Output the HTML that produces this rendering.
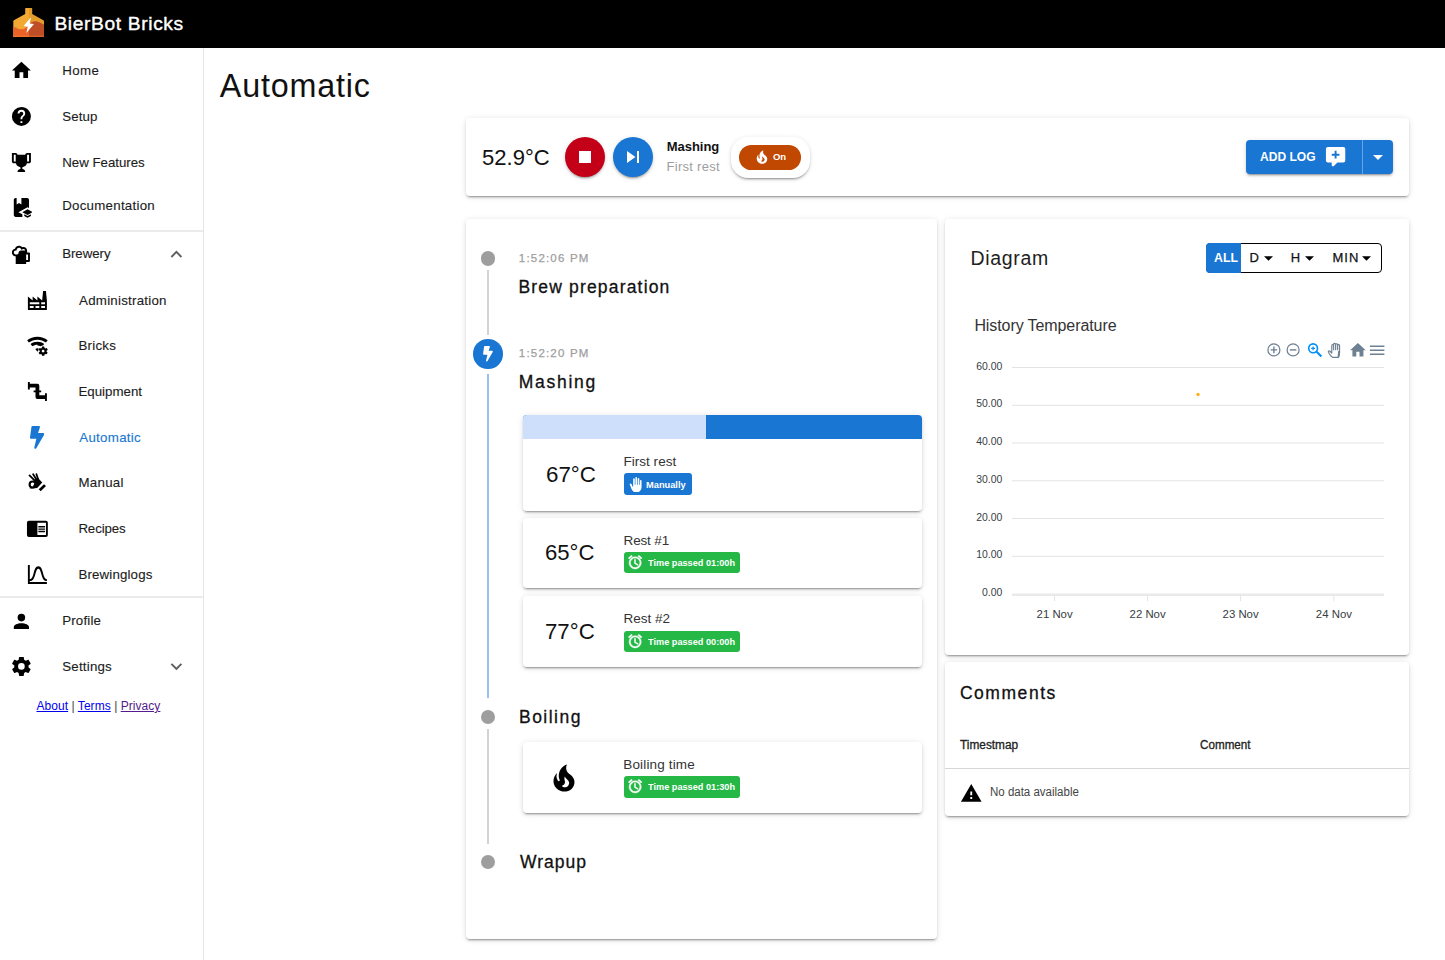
<!DOCTYPE html>
<html lang="en"><head>
<meta charset="utf-8">
<title>BierBot Bricks</title>
<style>
html,body{margin:0;padding:0;}
body{width:1445px;height:960px;position:relative;overflow:hidden;background:#fff;color:#000;
  font-family:"Liberation Sans",sans-serif;font-size:13px;}
*{box-sizing:border-box;}
.abs{position:absolute;}
.t{position:absolute;white-space:nowrap;line-height:1;}
svg{position:absolute;display:block;}
#appbar{position:absolute;left:0;top:0;width:1445px;height:48px;background:#000;}
#nav{position:absolute;left:0;top:48px;width:204.2px;height:912px;border-right:1.6px solid #e6e6e6;background:#fff;}
.hr{position:absolute;left:0;width:202.6px;height:1.9px;background:#ebebeb;}
.card{position:absolute;background:#fff;border-radius:4px;
  box-shadow:0 3px 1px -2px rgba(0,0,0,.2),0 2px 2px 0 rgba(0,0,0,.14),0 1px 6px 0 rgba(0,0,0,.12);}
.nt{font-size:13.3px;color:#1c1c1c;-webkit-text-stroke:0.12px #1c1c1c;}
.ts{font-size:11.5px;color:#9e9e9e;letter-spacing:1.3px;-webkit-text-stroke:0.25px #9e9e9e;}
.th{font-size:17.5px;font-weight:400;color:#111;-webkit-text-stroke:0.3px #111;}
.tc{font-size:22px;color:#111;}
.tn{font-size:13.5px;color:#333;}
.tch{font-size:9.7px;font-weight:700;color:#fff;}
.bt{font-size:13px;color:#111;-webkit-text-stroke:0.25px #111;}
.sc{border-radius:4px;}
.chip{position:absolute;height:20px;border-radius:3px;color:#fff;}
.chip.g{background:#25b847;}
.chip.b{background:#1976d2;}
</style>
</head>
<body>
<div id="appbar">
<svg style="left:13px;top:8px" width="31" height="29" viewBox="13 8 31 29">
  <defs><clipPath id="lg"><path d="M25.2 8.6Q25.2 8 25.8 8H31.6Q32.2 8 32.2 8.6V14L43.4 20.2Q44 20.6 44 21.3V36.4Q44 37 43.4 37H13.9Q13.3 37 13.3 36.4V21.3Q13.3 20.6 13.9 20.2L25.2 14Z"></path></clipPath></defs>
  <g clip-path="url(#lg)">
    <rect x="13" y="8" width="16" height="29" fill="#f2a933"></rect>
    <rect x="29" y="8" width="15" height="29" fill="#e39c2c"></rect>
    <path d="M13 26.6C16 27.2 18.5 30 22.5 29.2C27 28.3 29 24 29 24V37H13Z" fill="#e9622a"></path>
    <path d="M29 24C31 22.2 34 20.8 37 21.4C40.5 22 42.5 24 44 24.8V37H29Z" fill="#bf4d26"></path>
    <rect x="13" y="35.6" width="16" height="1.4" fill="#f7732a"></rect>
    <rect x="29" y="35.6" width="15" height="1.4" fill="#d8622a"></rect>
  </g>
  <path d="M30.9 17.2L23.6 26L27.7 26.7L26.4 33L34 23.9L29.7 23.6Z" fill="#fff"></path>
</svg>
<span class="t" id="brand" style="left: 54.4px; top: 13.8px; font-size: 19.2px; color: rgb(255, 255, 255); font-weight: 400; -webkit-text-stroke: 0.4px rgb(255, 255, 255); letter-spacing: 0.64px;">BierBot Bricks</span>
</div>

<div id="nav">
<!-- level 1 -->
<svg style="left:9.6px;top:11.1px" width="22.8" height="22.8" viewBox="0 0 24 24"><path d="M10,20V14H14V20H19V12H22L12,3L2,12H5V20H10Z"></path></svg>
<span class="t nt" style="left: 62.3px; top: 15.8px; letter-spacing: 0.34px;">Home</span>
<svg style="left:9.6px;top:56.8px" width="22.8" height="22.8" viewBox="0 0 24 24"><path d="M15.07,11.25L14.17,12.17C13.45,12.89 13,13.5 13,15H11V14.5C11,13.39 11.45,12.39 12.17,11.67L13.41,10.41C13.78,10.05 14,9.55 14,9C14,7.89 13.1,7 12,7A2,2 0 0,0 10,9H8A4,4 0 0,1 12,5A4,4 0 0,1 16,9C16,9.88 15.64,10.67 15.07,11.25M13,19H11V17H13M12,2A10,10 0 0,0 2,12A10,10 0 0,0 12,22A10,10 0 0,0 22,12C22,6.47 17.5,2 12,2Z"></path></svg>
<span class="t nt" style="left: 62.3px; top: 61.5px; letter-spacing: 0.08px;">Setup</span>
<svg style="left:9.6px;top:102.5px" width="22.8" height="22.8" viewBox="0 0 24 24"><path d="M18 2C17.1 2 16 3 16 4H8C8 3 6.9 2 6 2H2V11C2 12 3 13 4 13H6.2C6.6 15 7.9 16.7 11 17V19.08C8 19.54 8 22 8 22H16C16 22 16 19.54 13 19.08V17C16.1 16.7 17.4 15 17.8 13H20C21 13 22 12 22 11V2H18M6 11H4V4H6V11M20 11H18V4H20V11Z"></path></svg>
<span class="t nt" style="left: 62.2px; top: 108.4px; letter-spacing: -0.02px;">New Features</span>
<svg style="left:9.6px;top:148.1px" width="22.8" height="22.8" viewBox="0 0 24 24"><path d="M8.82 17L13 19.28V22H6C4.89 22 4 21.11 4 20V4C4 2.9 4.89 2 6 2H7V9L9.5 7.5L12 9V2H18C19.1 2 20 2.89 20 4V12.54L18.5 11.72L8.82 17M24 17L18.5 14L13 17L18.5 20L24 17M15 19.09V21.09L18.5 23L22 21.09V19.09L18.5 21L15 19.09Z"></path></svg>
<span class="t nt" style="left: 62.2px; top: 150.7px; letter-spacing: 0.26px;">Documentation</span>
<div class="hr" style="top:182px"></div>
<svg style="left:9.6px;top:194.8px" width="22.8" height="22.8" viewBox="0 0 24 24"><path fill-rule="evenodd" d="M6 14C3.8 14 2 12.2 2 10C2 8.1 3.3 6.5 5.2 6.1C5.8 4.3 7.5 3 9.5 3C10.8 3 12 3.6 12.8 4.5C13.2 4.3 13.7 4.2 14.2 4.2C16.3 4.2 18 5.9 18 8V10H20C20.55 10 21 10.45 21 11V19C21 19.55 20.55 20 20 20H17V22H6ZM6 12H7.5C8.3 12 9 11.3 9 10.5C9 9.1 10.1 8 11.5 8H16C16 7 15.2 6.2 14.2 6.2C13.75 6.2 13.35 6.4 13 6.7L12.2 7.3L11.8 6.5C11.4 5.6 10.5 5 9.5 5C8.3 5 7.25 5.85 7 7L6.900 8H6C4.900 8 4 8.900 4 10C4 11.100 4.900 12 6 12ZM17 12V18H19V12Z"></path></svg>
<span class="t nt" style="left: 62.2px; top: 198.9px; letter-spacing: -0.06px;">Brewery</span>
<svg style="left:165.1px;top:195.3px" width="22.8" height="22.8" viewBox="0 0 24 24"><path fill="#5f5f5f" d="M7.41,15.41L12,10.83L16.59,15.41L18,14L12,8L6,14L7.41,15.41Z"></path></svg>
<!-- level 2 -->
<svg style="left:25.7px;top:240.6px" width="22.8" height="22.8" viewBox="0 0 24 24"><path d="M4,18V20H8V18H4M4,14V16H14V14H4M10,18V20H14V18H10M16,14V16H20V14H16M16,18V20H20V18H16M2,22V8L7,12V8L12,12V8L17,12L18,2H21L22,12V22H2Z"></path></svg>
<span class="t nt" style="left: 79.1px; top: 245.6px; letter-spacing: 0.24px;">Administration</span>
<svg style="left:25.7px;top:286.3px" width="22.8" height="22.8" viewBox="0 0 24 24"><path d="M12 6C8.62 6 5.5 7.12 3 9L1.2 6.6C4.21 4.34 7.95 3 12 3S19.79 4.34 22.8 6.6L21 9C18.5 7.12 15.38 6 12 6M12 12C13.22 12 14.36 12.33 15.36 12.87C16.17 12.3 17.1 11.93 18.09 11.76L19.2 10.6C17.19 9.09 14.7 8.2 12 8.2S6.81 9.09 4.8 10.6L6.6 13C8.1 11.87 9.97 11.2 12 11.2M12 15C11.19 15 10.44 15.27 9.84 15.72L12 18.6L13 17.27C13 17.18 13 17.09 13 17C13 16.43 13.09 15.87 13.25 15.33C12.86 15.13 12.44 15 12 15M21.7 18.6V17.6L22.8 16.8C22.9 16.7 23 16.6 22.9 16.5L21.9 14.8C21.9 14.7 21.7 14.7 21.6 14.7L20.4 15.2C20.1 15 19.8 14.8 19.5 14.7L19.3 13.4C19.3 13.3 19.2 13.2 19.1 13.2H17.1C16.9 13.2 16.8 13.3 16.8 13.4L16.6 14.7C16.3 14.9 16.1 15 15.8 15.2L14.6 14.7C14.5 14.7 14.4 14.7 14.3 14.8L13.3 16.5C13.3 16.6 13.3 16.7 13.4 16.8L14.5 17.6V18.6L13.4 19.4C13.3 19.5 13.3 19.6 13.3 19.7L14.3 21.4C14.4 21.5 14.5 21.5 14.6 21.5L15.8 21C16 21.2 16.3 21.4 16.6 21.5L16.8 22.8C16.9 22.9 17 23 17.1 23H19.1C19.2 23 19.3 22.9 19.3 22.8L19.5 21.5C19.8 21.3 20 21.2 20.3 21L21.5 21.4C21.6 21.4 21.7 21.4 21.8 21.3L22.8 19.6C22.9 19.5 22.9 19.4 22.8 19.4L21.7 18.6M18 19.5C17.2 19.5 16.5 18.8 16.5 18S17.2 16.5 18 16.5 19.5 17.2 19.5 18 18.8 19.5 18 19.5Z"></path></svg>
<span class="t nt" style="left: 78.4px; top: 291.3px; letter-spacing: 0.25px;">Bricks</span>
<svg style="left:25.7px;top:332.0px" width="22.8" height="22.8" viewBox="0 0 24 24"><path d="M22,14H20V16H14V13H16V11H14V6A2,2 0 0,0 12,4H4V2H2V10H4V8H10V11H8V13H10V18A2,2 0 0,0 12,20H20V22H22"></path></svg>
<span class="t nt" style="left: 78.4px; top: 336.9px; letter-spacing: 0.01px;">Equipment</span>
<svg style="left:29.9px;top:377.9px" width="14.25" height="22.8" viewBox="0 0 320 512"><path fill="#1976d2" d="M296 160H180.6l42.6-129.8C227.2 15 215.7 0 200 0H56C44 0 33.8 8.9 32.2 20.8l-32 240C-1.7 275.2 9.5 288 24 288h118.7L96.6 482.5c-3.6 15.2 8 29.5 23.3 29.5 8.4 0 16.4-4.400 20.8-12l176-304c9.300-15.900-2.200-36-20.700-36z"></path></svg>
<span class="t nt" style="left: 79.3px; top: 382.5px; color: rgb(25, 118, 210); -webkit-text-stroke: 0.12px rgb(25, 118, 210); letter-spacing: 0.28px;">Automatic</span>
<svg style="left:25.7px;top:423.4px" width="22.8" height="22.8" viewBox="0 0 24 24"><path d="M18.95 14L21.05 15.9L15.5 21.3L13.4 19.2ZM8 9.5L12.7 7.4L17.1 12.1L11.8 17.9L6 18.4L9.5 12ZM3.500 18.500L7.500 16.500L8.500 18.400Z"></path><g fill="none" stroke="#000" stroke-linecap="round"><path stroke-width="1.900" d="M3.700 4.700L9.500 10.300M7.500 3.400L11 9M11 3.400L12.700 8.500"></path><circle cx="7" cy="14.200" r="3.200" stroke-width="2.200"></circle></g></svg>
<span class="t nt" style="left: 78.4px; top: 428.2px; letter-spacing: 0.29px;">Manual</span>
<svg style="left:25.7px;top:469.1px" width="22.8" height="22.8" viewBox="0 0 24 24"><path d="M13,12H20V13.5H13M13,9.5H20V11H13M13,14.5H20V16H13M21,4H3A2,2 0 0,0 1,6V19A2,2 0 0,0 3,21H21A2,2 0 0,0 23,19V6A2,2 0 0,0 21,4M21,19H12V6H21"></path></svg>
<span class="t nt" style="left: 78.4px; top: 473.9px; letter-spacing: -0.12px;">Recipes</span>
<svg style="left:25.7px;top:514.8px" width="22.8" height="22.8" viewBox="0 0 24 24"><path d="M9.96,11.31C10.82,8.1 11.5,6 13,6C14.5,6 15.18,8.1 16.04,11.31C17,14.92 18.1,19 22,19V17C19.8,17 19,14.54 17.97,10.8C16.96,7 16,3.5 13,3.5C10,3.5 9.04,7 8.03,10.8C7.03,14.54 6.2,17 4,17V2H2V22H22V20H4V19C7.9,19 9,14.92 9.96,11.31Z"></path></svg>
<span class="t nt" style="left: 78.4px; top: 519.6px; letter-spacing: 0.15px;">Brewinglogs</span>
<div class="hr" style="top:548.3px"></div>
<svg style="left:9.6px;top:561.6px" width="22.8" height="22.8" viewBox="0 0 24 24"><path d="M12,4A4,4 0 0,1 16,8A4,4 0 0,1 12,12A4,4 0 0,1 8,8A4,4 0 0,1 12,4M12,14C16.42,14 20,15.79 20,18V20H4V18C4,15.79 7.58,14 12,14Z"></path></svg>
<span class="t nt" style="left: 62.2px; top: 566.2px; letter-spacing: 0.18px;">Profile</span>
<svg style="left:9.6px;top:607.2px" width="22.8" height="22.8" viewBox="0 0 24 24"><path d="M12,15.5A3.5,3.5 0 0,1 8.5,12A3.5,3.5 0 0,1 12,8.5A3.5,3.5 0 0,1 15.5,12A3.500,3.500 0 0,1 12,15.5M19.430,12.970C19.470,12.650 19.500,12.330 19.500,12C19.500,11.670 19.470,11.340 19.430,11L21.540,9.370C21.730,9.220 21.780,8.950 21.660,8.730L19.660,5.270C19.540,5.050 19.270,4.960 19.050,5.050L16.560,6.050C16.040,5.660 15.500,5.320 14.870,5.070L14.500,2.420C14.460,2.180 14.250,2 14,2H10C9.750,2 9.540,2.180 9.500,2.420L9.130,5.070C8.500,5.320 7.960,5.660 7.440,6.050L4.950,5.050C4.730,4.960 4.460,5.050 4.340,5.270L2.340,8.730C2.210,8.950 2.270,9.220 2.460,9.370L4.570,11C4.530,11.340 4.500,11.670 4.500,12C4.500,12.330 4.530,12.650 4.570,12.970L2.460,14.630C2.270,14.780 2.210,15.050 2.340,15.270L4.340,18.730C4.460,18.950 4.730,19.030 4.950,18.950L7.440,17.940C7.960,18.340 8.500,18.680 9.130,18.930L9.500,21.580C9.540,21.820 9.750,22 10,22H14C14.250,22 14.460,21.820 14.500,21.580L14.870,18.930C15.500,18.670 16.040,18.340 16.560,17.940L19.050,18.950C19.270,19.030 19.540,18.950 19.660,18.730L21.660,15.270C21.780,15.050 21.730,14.780 21.540,14.630L19.430,12.970Z"></path></svg>
<span class="t nt" style="left: 62.2px; top: 612px; letter-spacing: 0.22px;">Settings</span>
<svg style="left:165.1px;top:607.3px" width="22.8" height="22.8" viewBox="0 0 24 24"><path fill="#5f5f5f" d="M7.41,8.58L12,13.17L16.59,8.58L18,10L12,16L6,10L7.41,8.58Z"></path></svg>
<span class="t" id="links" style="left: 36.5px; top: 652.2px; font-size: 12px; color: rgb(68, 68, 68); letter-spacing: 0.05px;"><a style="color:#0000ee;text-decoration:underline">About</a> | <a style="color:#0000ee;text-decoration:underline">Terms</a> | <a style="color:#551a8b;text-decoration:underline">Privacy</a></span>
</div>

<span class="t" id="h1" style="left: 219.8px; top: 69.9px; font-size: 32.3px; color: rgb(17, 17, 17); letter-spacing: 0.82px;">Automatic</span>

<!-- top card -->
<div class="card" style="left:466px;top:118px;width:943px;height:78px">
  <span class="t" style="left: 15.8px; top: 28.2px; font-size: 22.8px; color: rgb(17, 17, 17); letter-spacing: 0px; transform-origin: 0px 0px; transform: scaleX(0.967);">52.9°C</span>
  <div class="abs" style="left:99px;top:19px;width:40px;height:40px;border-radius:50%;background:#c30018;box-shadow:0 3px 1px -2px rgba(0,0,0,.2),0 2px 2px 0 rgba(0,0,0,.14),0 1px 5px 0 rgba(0,0,0,.12)">
    <svg style="left:8px;top:8px" width="24" height="24" viewBox="0 0 24 24"><path fill="#fff" d="M18,18H6V6H18V18Z"></path></svg></div>
  <div class="abs" style="left:146.5px;top:19px;width:40px;height:40px;border-radius:50%;background:#1976d2;box-shadow:0 3px 1px -2px rgba(0,0,0,.2),0 2px 2px 0 rgba(0,0,0,.14),0 1px 5px 0 rgba(0,0,0,.12)">
    <svg style="left:8px;top:8px" width="24" height="24" viewBox="0 0 24 24"><path fill="#fff" d="M16,18H18V6H16M6,18L14.5,12L6,6V18Z"></path></svg></div>
  <span class="t" style="left: 200.7px; top: 22.2px; font-size: 13px; font-weight: 700; color: rgb(17, 17, 17); letter-spacing: -0.03px;">Mashing</span>
  <span class="t" style="left: 200.5px; top: 42.3px; font-size: 13px; color: rgb(158, 158, 158); letter-spacing: 0.28px;">First rest</span>
  <div class="abs" style="left:265px;top:19px;width:78.5px;height:40.5px;border-radius:17px;background:#fff;box-shadow:0 3px 1px -2px rgba(0,0,0,.2),0 2px 2px 0 rgba(0,0,0,.14),0 1px 5px 0 rgba(0,0,0,.12)">
    <div class="abs" style="left:8px;top:8.1px;width:62px;height:24.6px;border-radius:12.3px;background:#c14800">
      <svg style="left:14.2px;top:3.1px" width="18" height="18" viewBox="0 0 24 24"><path fill="#fff" d="M17.66 11.2C17.43 10.9 17.15 10.64 16.89 10.38C16.22 9.78 15.46 9.35 14.82 8.72C13.33 7.26 13 4.85 13.95 3C13 3.23 12.17 3.75 11.46 4.32C8.87 6.4 7.85 10.07 9.07 13.22C9.11 13.32 9.15 13.42 9.15 13.55C9.15 13.77 9 13.97 8.8 14.05C8.57 14.15 8.33 14.09 8.14 13.93C8.08 13.88 8.04 13.83 8 13.76C6.87 12.33 6.69 10.28 7.45 8.64C5.78 10 4.87 12.3 5 14.47C5.06 14.97 5.12 15.47 5.29 15.97C5.43 16.57 5.7 17.17 6 17.7C7.08 19.43 8.95 20.67 10.96 20.92C13.1 21.19 15.39 20.8 17.03 19.32C18.86 17.66 19.5 15 18.56 12.72L18.43 12.46C18.22 12 17.66 11.2 17.66 11.2M14.5 17.5C14.22 17.74 13.76 18 13.4 18.1C12.28 18.5 11.16 17.94 10.5 17.28C11.69 17 12.4 16.12 12.61 15.23C12.78 14.43 12.46 13.77 12.33 13C12.21 12.26 12.23 11.63 12.5 10.94C12.69 11.32 12.89 11.7 13.13 12C13.9 13 15.11 13.44 15.37 14.8C15.41 14.94 15.43 15.08 15.43 15.23C15.46 16.05 15.1 16.95 14.5 17.5H14.5Z"></path></svg>
      <span class="t" style="left: 34.4px; top: 8.3px; font-size: 9px; font-weight: 700; color: rgb(255, 255, 255); letter-spacing: 0px; transform-origin: 0px 0px; transform: scaleX(1.053);">On</span>
    </div>
  </div>
  <div class="abs" style="left:780px;top:22px;width:147px;height:34px;border-radius:4px;background:#1976d2;box-shadow:0 3px 1px -2px rgba(0,0,0,.2),0 2px 2px 0 rgba(0,0,0,.14),0 1px 5px 0 rgba(0,0,0,.12)">
    <span class="t" style="left: 14.4px; top: 9.8px; font-size: 13px; font-weight: 700; color: rgb(255, 255, 255); letter-spacing: 0px; transform-origin: 0px 0px; transform: scaleX(0.927);">ADD LOG</span>
    <svg style="left:77.5px;top:5.4px" width="23.2" height="23.2" viewBox="0 0 24 24"><path fill="#fff" d="M9,22A1,1 0 0,1 8,21V18H4A2,2 0 0,1 2,16V4C2,2.89 2.9,2 4,2H20A2,2 0 0,1 22,4V16A2,2 0 0,1 20,18H13.9L10.2,21.71C10,21.9 9.75,22 9.5,22V22H9M11,6V9H8V11H11V14H13V11H16V9H13V6H11Z"></path></svg>
    <div class="abs" style="left:116px;top:0;width:1px;height:34px;background:rgba(255,255,255,.35)"></div>
    <svg style="left:120.4px;top:4.6px" width="24" height="24" viewBox="0 0 24 24"><path fill="#fff" d="M7,10L12,15L17,10H7Z"></path></svg>
  </div>
</div>

<!-- timeline card -->
<div class="card" id="tl" style="left:466px;top:219px;width:471px;height:720px">
  <div class="abs" style="left:21.1px;top:51.4px;width:2.3px;height:64.6px;background:#d3d3d3"></div>
  <div class="abs" style="left:21.1px;top:155.2px;width:2.3px;height:323.8px;background:#98c1f0"></div>
  <div class="abs" style="left:21.1px;top:510px;width:2.3px;height:114.7px;background:#d3d3d3"></div>
  <div class="abs" style="left:15px;top:32.2px;width:14.4px;height:14.4px;border-radius:50%;background:#9e9e9e"></div>
  <div class="abs" style="left:7.3px;top:120px;width:29.7px;height:29.7px;border-radius:50%;background:#1976d2">
    <svg style="left:9.9px;top:7.3px" width="9.9" height="15.6" viewBox="0 0 320 512"><path fill="#fff" d="M296 160H180.6l42.6-129.8C227.2 15 215.7 0 200 0H56C44 0 33.8 8.9 32.2 20.8l-32 240C-1.7 275.2 9.5 288 24 288h118.7L96.6 482.5c-3.6 15.2 8 29.5 23.3 29.5 8.4 0 16.4-4.400 20.8-12l176-304c9.300-15.900-2.200-36-20.700-36z"></path></svg></div>
  <div class="abs" style="left:15px;top:490.5px;width:14.4px;height:14.4px;border-radius:50%;background:#9e9e9e"></div>
  <div class="abs" style="left:15px;top:636px;width:14.4px;height:14.4px;border-radius:50%;background:#9e9e9e"></div>

  <span class="t ts" style="left: 52.8px; top: 33.9px; letter-spacing: 1.2px;">1:52:06 PM</span>
  <span class="t th" style="left: 52.4px; top: 60.1px; letter-spacing: 1.18px;">Brew preparation</span>
  <span class="t ts" style="left: 52.8px; top: 128.9px; letter-spacing: 1.2px;">1:52:20 PM</span>
  <span class="t th" style="left: 52.8px; top: 155.4px; letter-spacing: 1.72px;">Mashing</span>
  <span class="t th" style="left: 53px; top: 489.9px; letter-spacing: 1.48px;">Boiling</span>
  <span class="t th" style="left: 54px; top: 635.4px; letter-spacing: 1px;">Wrapup</span>

  <div class="card sc" style="left:57px;top:196px;width:399px;height:95.5px;overflow:hidden">
    <div class="abs" style="left:0;top:0;width:399px;height:24px;background:#1976d2"></div>
    <div class="abs" style="left:0;top:0;width:182.7px;height:24px;background:#cddffb"></div>
    <span class="t tc" style="left: 22.7px; top: 49.2px; letter-spacing: 0px; transform-origin: 0px 0px; transform: scaleX(1.016);">67°C</span>
    <span class="t tn" style="left: 100.4px; top: 39.9px; letter-spacing: 0.04px;">First rest</span>
    <div class="chip b" style="left:101px;top:58.3px;width:68.4px;height:21.6px">
      <svg style="left:3.6px;top:3.3px" width="15.5" height="15.5" viewBox="0 0 24 24"><path fill="#fff" d="M13 24C9.74 24 6.81 22 5.6 19L2.57 11.37C2.26 10.58 3 9.79 3.81 10.05L4.6 10.31C5.16 10.5 5.62 10.92 5.84 11.47L7.25 15H8V3.25C8 2.56 8.56 2 9.25 2S10.5 2.56 10.5 3.25V12H11.5V1.25C11.5 .56 12.06 0 12.75 0S14 .56 14 1.25V12H15V2.75C15 2.06 15.56 1.5 16.25 1.5C16.94 1.5 17.5 2.06 17.5 2.75V12H18.5V5.75C18.5 5.06 19.06 4.500 19.750 4.500S21 5.060 21 5.750V16C21 20.420 17.420 24 13 24Z"></path></svg>
      <span class="t tch" style="left: 21.8px; top: 6.4px; letter-spacing: 0px; transform-origin: 0px 0px; transform: scaleX(0.957);">Manually</span>
    </div>
  </div>
  <div class="card sc" style="left:57px;top:299px;width:399px;height:70.2px">
    <span class="t tc" style="left: 22.4px; top: 23.9px; letter-spacing: 0px; transform-origin: 0px 0px; transform: scaleX(1.005);">65°C</span>
    <span class="t tn" style="left: 100.6px; top: 15.8px; letter-spacing: -0.16px;">Rest #1</span>
    <div class="chip g" style="left:101px;top:34.3px;width:116px;height:20.8px">
      <svg style="left:2.7px;top:1.9px" width="16.3" height="16.3" viewBox="0 0 24 24"><path fill="#fff" stroke="#fff" stroke-width="0.7" d="M12,20A7,7 0 0,1 5,13A7,7 0 0,1 12,6A7,7 0 0,1 19,13A7,7 0 0,1 12,20M12,4A9,9 0 0,0 3,13A9,9 0 0,0 12,22A9,9 0 0,0 21,13A9,9 0 0,0 12,4M12.5,8H11V14L15.75,16.85L16.5,15.62L12.5,13.25V8M7.88,3.39L6.6,1.86L2,5.71L3.29,7.24L7.88,3.39M22,5.72L17.4,1.86L16.11,3.39L20.71,7.25L22,5.72Z"></path></svg>
      <span class="t tch" style="left: 24px; top: 5.4px; letter-spacing: 0px; transform-origin: 0px 0px; transform: scaleX(0.947);">Time passed 01:00h</span>
    </div>
  </div>
  <div class="card sc" style="left:57px;top:377.2px;width:399px;height:70.6px">
    <span class="t tc" style="left: 22.4px; top: 25.2px; letter-spacing: 0px; transform-origin: 0px 0px; transform: scaleX(1.011);">77°C</span>
    <span class="t tn" style="left: 100.6px; top: 15.8px; letter-spacing: -0.01px;">Rest #2</span>
    <div class="chip g" style="left:101px;top:34.4px;width:116px;height:21.3px">
      <svg style="left:2.7px;top:2.1px" width="16.3" height="16.3" viewBox="0 0 24 24"><path fill="#fff" stroke="#fff" stroke-width="0.7" d="M12,20A7,7 0 0,1 5,13A7,7 0 0,1 12,6A7,7 0 0,1 19,13A7,7 0 0,1 12,20M12,4A9,9 0 0,0 3,13A9,9 0 0,0 12,22A9,9 0 0,0 21,13A9,9 0 0,0 12,4M12.5,8H11V14L15.75,16.85L16.5,15.62L12.5,13.25V8M7.88,3.39L6.6,1.86L2,5.71L3.29,7.24L7.88,3.39M22,5.72L17.4,1.86L16.11,3.39L20.71,7.25L22,5.72Z"></path></svg>
      <span class="t tch" style="left: 24px; top: 6.6px; letter-spacing: 0px; transform-origin: 0px 0px; transform: scaleX(0.947);">Time passed 00:00h</span>
    </div>
  </div>
  <div class="card sc" style="left:57px;top:522.8px;width:399px;height:71.6px">
    <svg style="left:23px;top:18px" width="36" height="36" viewBox="0 0 24 24"><path fill="#000" d="M17.66 11.2C17.43 10.9 17.15 10.64 16.89 10.38C16.22 9.78 15.46 9.35 14.82 8.72C13.33 7.26 13 4.85 13.95 3C13 3.23 12.17 3.75 11.46 4.32C8.87 6.4 7.85 10.07 9.07 13.22C9.11 13.32 9.15 13.42 9.15 13.55C9.15 13.77 9 13.97 8.8 14.05C8.57 14.15 8.33 14.09 8.14 13.93C8.08 13.88 8.04 13.83 8 13.76C6.87 12.33 6.69 10.28 7.45 8.64C5.78 10 4.87 12.3 5 14.47C5.06 14.97 5.12 15.47 5.29 15.97C5.43 16.57 5.7 17.17 6 17.7C7.08 19.43 8.95 20.67 10.96 20.92C13.1 21.19 15.39 20.8 17.03 19.32C18.86 17.66 19.5 15 18.56 12.72L18.43 12.46C18.22 12 17.66 11.2 17.66 11.2M14.5 17.5C14.22 17.74 13.76 18 13.4 18.1C12.28 18.5 11.16 17.94 10.5 17.28C11.69 17 12.4 16.12 12.61 15.23C12.78 14.43 12.46 13.77 12.33 13C12.21 12.26 12.23 11.63 12.5 10.94C12.69 11.32 12.89 11.7 13.13 12C13.9 13 15.11 13.44 15.37 14.8C15.41 14.94 15.43 15.08 15.43 15.23C15.46 16.05 15.1 16.95 14.5 17.5H14.5Z"></path></svg>
    <span class="t tn" style="left: 100.3px; top: 16.7px; letter-spacing: 0.15px;">Boiling time</span>
    <div class="chip g" style="left:101px;top:34.4px;width:116px;height:21.6px">
      <svg style="left:2.7px;top:2.1px" width="16.3" height="16.3" viewBox="0 0 24 24"><path fill="#fff" stroke="#fff" stroke-width="0.7" d="M12,20A7,7 0 0,1 5,13A7,7 0 0,1 12,6A7,7 0 0,1 19,13A7,7 0 0,1 12,20M12,4A9,9 0 0,0 3,13A9,9 0 0,0 12,22A9,9 0 0,0 21,13A9,9 0 0,0 12,4M12.5,8H11V14L15.75,16.85L16.5,15.62L12.5,13.25V8M7.88,3.39L6.6,1.86L2,5.71L3.29,7.24L7.88,3.39M22,5.72L17.4,1.86L16.11,3.39L20.71,7.25L22,5.72Z"></path></svg>
      <span class="t tch" style="left: 24px; top: 5.5px; letter-spacing: 0px; transform-origin: 0px 0px; transform: scaleX(0.947);">Time passed 01:30h</span>
    </div>
  </div>
</div>
<!-- diagram card -->
<div class="card" style="left:945px;top:219px;width:464px;height:435.5px">
  <span class="t" style="left: 25.6px; top: 29.9px; font-size: 19.5px; color: rgb(34, 34, 34); letter-spacing: 0.66px;">Diagram</span>
  <div class="abs" style="left:261px;top:24px;width:176px;height:30px;border:1px solid #000;border-radius:4px;background:#fff"></div>
  <div class="abs" style="left:261px;top:24px;width:35px;height:30px;border-radius:4px 0 0 4px;background:#1976d2"></div>
  <span class="t" style="left: 268.9px; top: 31.8px; font-size: 13px; font-weight: 700; color: rgb(255, 255, 255); letter-spacing: 0px; transform-origin: 0px 0px; transform: scaleX(0.946);">ALL</span>
  <span class="t bt" style="left: 304.5px; top: 31.8px; letter-spacing: 0px;">D</span>
  <svg style="left:318.5px;top:37px" width="9" height="5" viewBox="0 0 10 5"><path d="M0,0L5,5L10,0Z"></path></svg>
  <span class="t bt" style="left: 345.8px; top: 31.8px; letter-spacing: 0px;">H</span>
  <svg style="left:360.2px;top:37px" width="9" height="5" viewBox="0 0 10 5"><path d="M0,0L5,5L10,0Z"></path></svg>
  <span class="t bt" style="left: 387.5px; top: 31.8px; letter-spacing: 0.98px;">MIN</span>
  <svg style="left:417.4px;top:37px" width="9" height="5" viewBox="0 0 10 5"><path d="M0,0L5,5L10,0Z"></path></svg>

  <span class="t" style="left: 29.4px; top: 99px; font-size: 16px; color: rgb(51, 51, 51); letter-spacing: -0.09px;">History Temperature</span>

  <svg style="left:0;top:110px" width="464" height="320" viewBox="945 329 464 320" font-family="&quot;Liberation Sans&quot;,sans-serif">
    <!-- toolbar -->
    <g fill="none" stroke="#6e8192" stroke-width="1.25">
      <circle cx="1273.9" cy="349.9" r="6"></circle><path d="M1270.6 349.9H1277.2M1273.9 346.6V353.2" stroke-width="1.4"></path>
      <circle cx="1293.1" cy="349.9" r="6"></circle><path d="M1289.8 349.9H1296.4" stroke-width="1.4"></path>
    </g>
    <g fill="none" stroke="#008ffb" stroke-width="1.6">
      <circle cx="1313.1" cy="348.3" r="4.4"></circle><path d="M1316.4 351.6L1321.4 356.6" stroke-width="2.1"></path><path d="M1311.2 348.3H1315M1313.1 346.4V350.2" stroke-width="1.2"></path>
    </g>
    <g transform="translate(1326.6 342.2) scale(0.74)"><path fill="none" stroke="#6e8192" stroke-width="1.6" stroke-linejoin="round" d="M8 20.5C5.5 18.5 3.5 15.500 2.500 13.500C1.800 12 3.500 11 4.600 12.200L7 14.800V4.500C7 2.800 9.500 2.800 9.500 4.500V2.800C9.500 1.100 12.200 1.100 12.200 2.800V3.300C12.200 1.700 14.900 1.700 14.900 3.300V4.600C14.900 3 17.500 3 17.500 4.600V14C17.500 17 16.800 19 16 20.500ZM9.500 4.500V11M12.200 3V11M14.900 4.500V11"></path><path fill="#6e8192" d="M15.600 12H17.800V16C17.800 18 17.200 19.500 16.500 20.800H14.800Z"></path></g>
    <path fill="#6e8192" d="M1356.3 356.4V351.8H1359.5V356.400H1363.400V350.200H1365.700L1357.900 343.100L1350.100 350.200H1352.400V356.400Z"></path>
    <path stroke="#6e8192" stroke-width="1.500" d="M1369.900 346.300H1384.400M1369.900 350.300H1384.400M1369.900 354.300H1384.400"></path>
    <!-- grid -->
    <g stroke="#e3e3e3" stroke-width="1">
      <path d="M1012 367.5H1384M1012 405.300H1384M1012 443H1384M1012 480.800H1384M1012 518.500H1384M1012 556.300H1384"></path>
      <path d="M1012 594.1H1384"></path><path d="M1012 595.2H1384" stroke="#e0e0e0"></path>
      <path d="M1054.600 595.500V601.200M1147.600 595.500V601.200M1240.600 595.500V601.200M1333.900 595.500V601.200"></path>
    </g>
    <g font-size="10.45" fill="#373d3f" text-anchor="end">
      <text x="1002.300" y="369.500">60.00</text>
      <text x="1002.300" y="407.300">50.00</text>
      <text x="1002.300" y="445">40.00</text>
      <text x="1002.300" y="482.800">30.00</text>
      <text x="1002.300" y="520.500">20.00</text>
      <text x="1002.300" y="558.300">10.00</text>
      <text x="1002.300" y="596.400">0.00</text>
    </g>
    <g font-size="11.4" fill="#373d3f" text-anchor="middle">
      <text x="1054.600" y="618">21 Nov</text>
      <text x="1147.600" y="618">22 Nov</text>
      <text x="1240.600" y="618">23 Nov</text>
      <text x="1333.900" y="618">24 Nov</text>
    </g>
    <circle cx="1198" cy="394.500" r="1.700" fill="#feb019"></circle>
  </svg>
</div>

<!-- comments card -->
<div class="card" style="left:945px;top:662px;width:464px;height:154px">
  <span class="t th" style="left: 14.9px; top: 23px; letter-spacing: 1.55px;">Comments</span>
  <span class="t" style="left: 15.3px; top: 76.5px; font-size: 12px; font-weight: 400; color: rgb(34, 34, 34); -webkit-text-stroke: 0.3px rgb(34, 34, 34); letter-spacing: 0px; transform-origin: 0px 0px; transform: scaleX(0.987);">Timestmap</span>
  <span class="t" style="left: 255.4px; top: 76.5px; font-size: 12px; font-weight: 400; color: rgb(34, 34, 34); -webkit-text-stroke: 0.3px rgb(34, 34, 34); letter-spacing: 0px; transform-origin: 0px 0px; transform: scaleX(0.972);">Comment</span>
  <div class="abs" style="left:0;top:105.500px;width:464px;height:1.600px;background:#d6d6d6"></div>
  <svg style="left:15.400px;top:119.500px" width="22.500" height="22.500" viewBox="0 0 24 24"><path d="M13,14H11V10H13M13,18H11V16H13M1,21H23L12,2L1,21Z"></path></svg>
  <span class="t" style="left: 44.6px; top: 124.3px; font-size: 12px; color: rgb(68, 68, 68); letter-spacing: 0px; transform-origin: 0px 0px; transform: scaleX(0.958);">No data available</span>
</div>



</body></html>
